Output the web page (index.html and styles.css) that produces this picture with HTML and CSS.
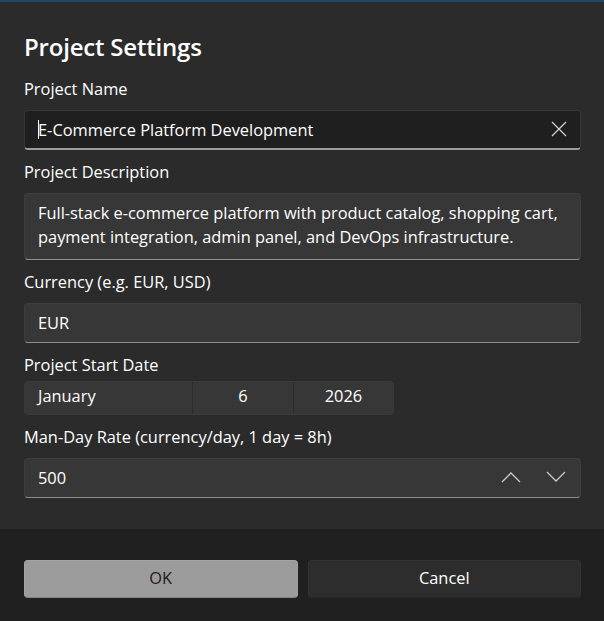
FILE: index.html
```html
<!DOCTYPE html>
<html lang="en">
<head>
<meta charset="utf-8">
<title>Project Settings</title>
<link rel="stylesheet" href="styles.css">
</head>
<body>
<div class="dialog">
  <div class="content">
    <h1 class="title">Project Settings</h1>

    <div class="field">
      <div class="label">Project Name</div>
      <div class="textbox focused">
        <span class="caret"></span>
        <span class="value">E-Commerce Platform Development</span>
        <svg class="clear" width="16" height="16" viewBox="0 0 16 16" aria-hidden="true">
          <path d="M1 1 L15 15 M15 1 L1 15" stroke="#d0d0d0" stroke-width="1.3" fill="none"/>
        </svg>
      </div>
    </div>

    <div class="field">
      <div class="label">Project Description</div>
      <div class="textbox multiline">
        <div class="line">Full-stack e-commerce platform with product catalog, shopping cart,</div>
        <div class="line">payment integration, admin panel, and DevOps infrastructure.</div>
      </div>
    </div>

    <div class="field">
      <div class="label">Currency (e.g. EUR, USD)</div>
      <div class="textbox"><span class="value">EUR</span></div>
    </div>

    <div class="field">
      <div class="label label-tight">Project Start Date</div>
      <div class="datepicker">
        <div class="dp-cell dp-month">January</div>
        <div class="dp-cell dp-day">6</div>
        <div class="dp-cell dp-year">2026</div>
      </div>
    </div>

    <div class="field">
      <div class="label">Man-Day Rate (currency/day, 1 day = 8h)</div>
      <div class="textbox number">
        <span class="value">500</span>
        <span class="spin">
          <svg width="20" height="12" viewBox="0 0 20 12" aria-hidden="true">
            <path d="M1 11 L10 2 L19 11" stroke="#c8c8c8" stroke-width="1.3" fill="none"/>
          </svg>
          <svg width="20" height="12" viewBox="0 0 20 12" aria-hidden="true">
            <path d="M1 1 L10 10 L19 1" stroke="#c8c8c8" stroke-width="1.3" fill="none"/>
          </svg>
        </span>
      </div>
    </div>
  </div>

  <div class="footer">
    <button class="btn primary">OK</button>
    <button class="btn">Cancel</button>
  </div>
</div>
</body>
</html>
```

FILE: styles.css
```css
html, body {
  margin: 0;
  padding: 0;
  background: #2b2b2b;
}

body {
  font-family: "Open Sans", "Noto Sans", "Liberation Sans", sans-serif;
  color: #ffffff;
  font-size: 16.4px;
}

.dialog {
  width: 604px;
  height: 621px;
  display: flex;
  flex-direction: column;
  box-sizing: border-box;
  border-top: 2px solid #1d4863;
  background: #2b2b2b;
}

.content {
  flex: 1;
  padding: 29px 23px 0 24px;
}

.title {
  margin: 0 0 14px 0;
  font-size: 24px;
  font-weight: 600;
  line-height: 32px;
  letter-spacing: -0.2px;
}

.field {
  margin-bottom: 10px;
}

.label {
  line-height: 24px;
  margin-bottom: 9px;
}

.label-tight {
  margin-bottom: 4px;
}

.textbox {
  box-sizing: border-box;
  height: 40px;
  display: flex;
  align-items: center;
  padding: 0 14px 2px 13px;
  background: #373737;
  border: 1px solid #3d3d3d;
  border-bottom: 1px solid #8e8e8e;
  border-radius: 4px;
}

.textbox.focused {
  background: #1f1f1f;
  border-color: #363636;
  border-bottom: 2px solid #9c9c9c;
  padding-bottom: 1px;
}

.caret {
  width: 1px;
  height: 19px;
  background: #ffffff;
  margin-right: -1px;
}

.value {
  flex: 1;
  white-space: nowrap;
}

.clear {
  margin-right: -1px;
}

.textbox.multiline {
  height: 67px;
  display: block;
  padding-top: 7px;
}

.line {
  line-height: 24px;
  white-space: nowrap;
}

.datepicker {
  box-sizing: border-box;
  width: 370px;
  height: 34px;
  display: flex;
  background: #373737;
  border: 1px solid #3a3a3a;
  border-radius: 4px;
}

.dp-cell {
  display: flex;
  align-items: center;
  line-height: 24px;
  padding-bottom: 4px;
}

.dp-month {
  width: 168px;
  padding-left: 13px;
  box-sizing: border-box;
  border-right: 1px solid #2d2d2d;
}

.dp-day {
  width: 100px;
  justify-content: center;
  border-right: 1px solid #2d2d2d;
}

.dp-year {
  flex: 1;
  justify-content: center;
}

.spin {
  display: flex;
  gap: 25px;
  align-items: center;
}

.footer {
  height: 92px;
  box-sizing: border-box;
  background: #202020;
  padding: 31px 23px 0 24px;
  display: flex;
  gap: 10px;
  align-items: flex-start;
}

.btn {
  flex: 1;
  height: 38px;
  border-radius: 4px;
  font-family: "Open Sans", "Noto Sans", "Liberation Sans", sans-serif;
  font-size: 16.4px;
  color: #ffffff;
  background: #2d2d2d;
  border: 1px solid #333333;
  border-bottom-color: #2a2a2a;
  padding: 0 0 4px 0;
}

.btn.primary {
  background: #9b9b9b;
  color: #1b1b1b;
  border-color: #a3a3a3;
  border-bottom-color: #858585;
}
```
